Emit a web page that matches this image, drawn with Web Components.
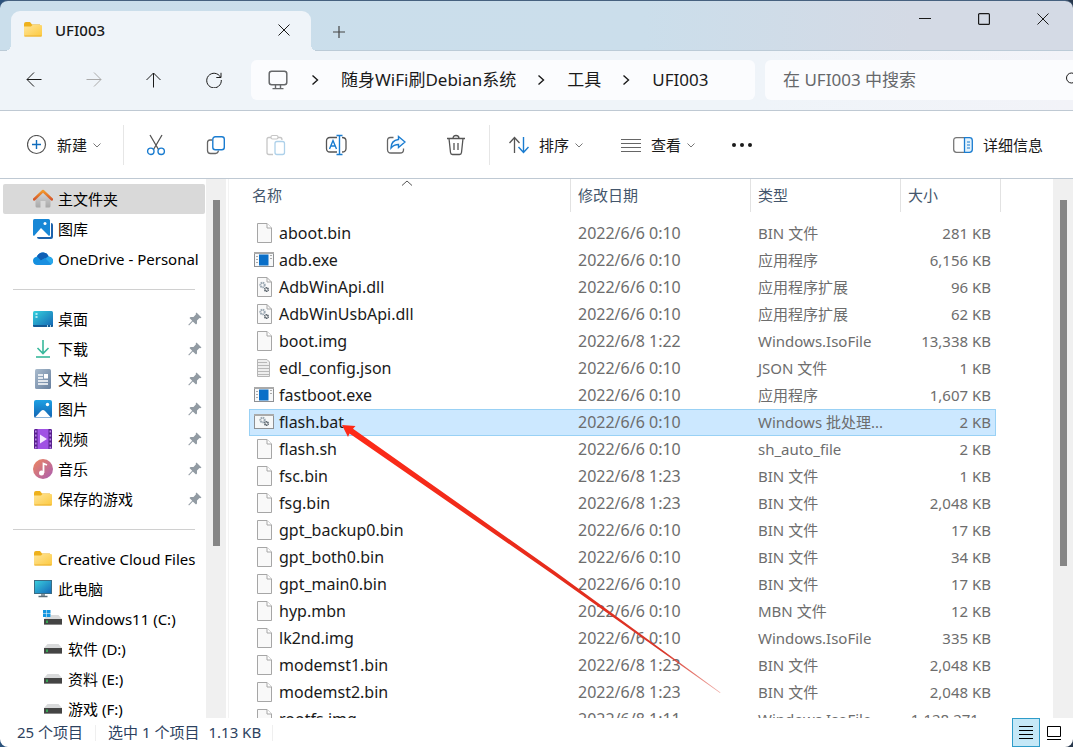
<!DOCTYPE html>
<html lang="zh-CN">
<head>
<meta charset="utf-8">
<title>UFI003</title>
<style>
html,body{height:100%;margin:0}
body{font:15px/20px "Noto Sans","Noto Sans CJK SC",sans-serif;color:#1a1a1a;background:linear-gradient(90deg,#2b527c,#46627f 40%,#3a3a55 90%,#27374c);overflow:hidden}
</style>
</head>
<body>
<explorer-window></explorer-window>
<script>
const ICONS = {
  folder: [20,20,`<defs><linearGradient id="f" x2="1" y2="1"><stop stop-color="#ffe59a"/><stop offset="1" stop-color="#fcc93f"/></linearGradient></defs><path d="M1 4q0-2 2-2h4l2 2.500h8v3H1z" fill="#eeb11c"/><path d="M1 6.500h7l1.500-1.500H18q1 0 1 1v9.500q0 1-1 1H2q-1 0-1-1z" fill="url(#f)"/><path d="M1.500 16h17" stroke="#eab030" />`],
  close: [12,12,`<path d="M.5.5l11 11M11.500.5l-11 11" stroke="currentColor"/>`],
  plus: [12,12,`<path d="M6 0v12M0 6h12" stroke="currentColor" stroke-width="1.200"/>`],
  min: [12,12,`<path d="M0 5.500h12" stroke="currentColor"/>`],
  max: [12,12,`<rect x=".6" y=".6" width="10.800" height="10.800" rx="1" stroke="currentColor" stroke-width="1.200"/>`],
  back: [16,16,`<path d="M15.500 7.500H1M8 .5l-7 7 7 7" stroke="currentColor"/>`],
  forward: [16,16,`<path d="M.5 7.500H15M8 .5l7 7-7 7" stroke="currentColor"/>`],
  up: [16,16,`<path d="M7.500 15.500V1M.5 8l7-7 7 7" stroke="currentColor"/>`],
  refresh: [16,16,`<path d="M14.500 5.200A7.300 7.300 0 1 0 15.300 8M15 .8v4.700h-4.700" stroke="currentColor"/>`],
  monitor: [20,20,`<rect x="1.200" y="1.200" width="17.600" height="13.600" rx="2.500" stroke="#66686a" stroke-width="1.500"/><path d="M7.500 15v3M12.500 15v3M4.500 18.600h11" stroke="#66686a" stroke-width="1.400"/>`],
  crumb: [8,12,`<path d="M1.500 1.500L6.500 6l-5 4.500" stroke="currentColor" stroke-width="1.400"/>`],
  search: [16,16,`<circle cx="6.500" cy="6" r="5" stroke="currentColor"/><path d="M10 10l5 5" stroke="currentColor"/>`],
  down: [8,8,`<path d="M.5 2.500L4 6l3.500-3.500" stroke="#777"/>`],
  sortup: [12,6,`<path d="M1 5.500l5-4.500 5 4.500" stroke="#555"/>`],
  create: [20,20,`<circle cx="9.500" cy="9.500" r="9" stroke="#555" stroke-width="1.200"/><path d="M9.500 5v9M5 9.500h9" stroke="#0f6cbd" stroke-width="1.400"/>`],
  cut: [20,22,`<path d="M4 1l8.500 14.500M16 1L7.500 15.500" stroke="#555" stroke-width="1.300"/><circle cx="4.800" cy="17.300" r="3.200" stroke="#1a7cd0" stroke-width="1.400"/><circle cx="15.200" cy="17.300" r="3.200" stroke="#1a7cd0" stroke-width="1.400"/>`],
  copy: [20,20,`<path d="M6 5H4Q1.500 5 1.500 7.500v8Q1.500 18.500 4.500 18.500h5q2.500 0 3-3" stroke="#666" stroke-width="1.300"/><rect x="6.800" y="1.700" width="11.500" height="13" rx="2.500" stroke="#1a7cd0" stroke-width="1.400"/>`],
  paste: [20,22,`<path d="M5 3.500H2.800Q1 3.500 1 5.500v13q0 2 2 2h4M12 3.500h2.200Q16 3.500 16 6" stroke="#c6c6c6" stroke-width="1.300"/><rect x="5" y="1.500" width="7" height="3.500" rx="1.500" stroke="#c6c6c6" stroke-width="1.200"/><rect x="9" y="7.500" width="9.500" height="13" rx="2" stroke="#aed1ea" stroke-width="1.300"/>`],
  rename: [22,22,`<path d="M12 3.500H5Q1.500 3.500 1.500 7v7.500Q1.500 18 5 18h7M17 3.500q4 0 4 3.500v7.500q0 3.500-4 3.500" stroke="#555" stroke-width="1.300"/><path d="M14.500 1.500v19M11.500 1.500h6M11.500 20.500h6M4.500 15L8 6.500l3.500 8.500M5.700 12h4.600" stroke="#1a7cd0" stroke-width="1.400"/>`],
  share: [20,20,`<path d="M7.500 2.500h-3Q1.500 2.500 1.500 5.500v9q0 3.500 3.500 3.500h9q3.500 0 3.500-3v-1.500" stroke="#666" stroke-width="1.300"/><path d="M12.500 1.500L19 7l-6.500 5.500v-3Q8 9.500 5 13q0-7.500 7.500-8.500z" stroke="#1a7cd0" stroke-width="1.400" fill="#f2f9ff"/>`],
  trash: [20,22,`<path d="M1 4.500h18M7 4.500Q7 1.500 10 1.500t3 3M3 4.500l1.500 14q.2 2 2 2h7q1.800 0 2-2L17 4.500M8 9v7M12 9v7" stroke="#555" stroke-width="1.300"/>`],
  sort: [20,18,`<path d="M5.500 17V2M.5 7l5-5.500 5 5.500" stroke="#555" stroke-width="1.300"/><path d="M14.500 1v15M9.500 11l5 5.500 5-5.500" stroke="#1a7cd0" stroke-width="1.400"/>`],
  view: [20,14,`<path d="M0 1.500h20M0 5.500h20M0 9.500h20M0 13.500h20" stroke="#666"/>`],
  more: [20,4,`<g fill="#1a1a1a"><circle cx="2" cy="2" r="2"/><circle cx="10" cy="2" r="2"/><circle cx="18" cy="2" r="2"/></g>`],
  details: [20,16,`<path d="M12 .7H3.500Q.7.700.7 3.500v9q0 2.800 2.800 2.800H12" stroke="#777" stroke-width="1.300"/><path d="M11.500.7h5q2.800 0 2.800 2.800v9q0 2.800-2.800 2.800h-5z" fill="#e3f2fc" stroke="#1a7cd0" stroke-width="1.300"/><path d="M14 5h3M14 8h3M14 11h3" stroke="#1a7cd0"/>`],
  home: [20,20,`<defs><linearGradient id="h" y2="1" x2="0"><stop stop-color="#d8d8d8"/><stop offset="1" stop-color="#a8a8a8"/></linearGradient><linearGradient id="r" y2="1" x2="0"><stop stop-color="#f39a2c"/><stop offset="1" stop-color="#d4572b"/></linearGradient></defs><path d="M2.500 9L10 2.500 17.500 9v8q0 1.500-1.500 1.500h-3.500V12h-5v6.500H4q-1.500 0-1.500-1.500z" fill="url(#h)"/><path d="M1 10.500L10 2l9 8.500" stroke="url(#r)" stroke-width="2.500" stroke-linejoin="round" stroke-linecap="round"/>`],
  gallery: [20,20,`<rect x="4" y="4" width="16" height="16" rx="2" fill="#1c62ac"/><rect x="2" y="2" width="16" height="16" rx="1" fill="#fff"/><rect width="17" height="17" rx="1.500" fill="#1787d6"/><path d="M1 17l7-8 8 8z" fill="#fff"/><circle cx="12" cy="4.500" r="1.500" fill="#fff"/>`],
  cloud: [20,14,`<path d="M5 13Q0 13 0 8.800 0 5.500 4 4.500 6 0 10.500.5q4 .5 5 4Q20 5 20 9t-4.500 4z" fill="#1490df"/><path d="M4 4.500Q6 0 10.500.5q4 .5 5 4L8 8.500z" fill="#0f5fb5"/><path d="M7 13l8-8.500Q20 5 20 9t-4.500 4z" fill="#2aa8ea"/><path d="M2 12L12 6l6 6q-1 1-3 1H5z" fill="#1a8fe0"/>`],
  desktop: [20,16,`<defs><linearGradient id="d" x2="1" y2="1"><stop stop-color="#35d0dc"/><stop offset="1" stop-color="#1364b4"/></linearGradient></defs><rect width="20" height="16" rx="1.500" fill="url(#d)"/><path d="M0 14h20v.5q0 1.500-1.500 1.500h-17Q0 16 0 14.500z" fill="#145a95"/><path d="M2.500 3h2M2.500 6h2M14 15h1M17 15h1" stroke="#d6fbff" stroke-width="1.400"/>`],
  download: [20,20,`<path d="M10 1v13M4.500 9l5.500 5.500L15.500 9" stroke="#39b89c" stroke-width="1.600"/><path d="M3 18h14" stroke="#39b89c" stroke-width="1.600"/>`],
  doc: [20,20,`<defs><linearGradient id="o" x2="1" y2="1"><stop stop-color="#a9bbcd"/><stop offset="1" stop-color="#667f9e"/></linearGradient></defs><rect x="2" width="16" height="20" rx="1.500" fill="url(#o)"/><path d="M5 6h5M5 9h5M5 12h10M5 15h10" stroke="#fff" stroke-width="1.400"/><path d="M11 5h4v4.500h-4z" fill="#fff"/>`],
  picture: [20,20,`<defs><linearGradient id="p" x2="0" y2="1"><stop stop-color="#1ea1e4"/><stop offset="1" stop-color="#1263b2"/></linearGradient></defs><rect x="1" y="1" width="18" height="18" rx="2" fill="url(#p)"/><path d="M2 18.500l6-6.500q2-2 4 0l6 6.500z" fill="#fff"/><circle cx="14.500" cy="5.500" r="1.700" fill="#fff"/>`],
  video: [20,20,`<rect x="1" width="18" height="20" rx="1.500" fill="#a052e4"/><path d="M1 1.500Q1 0 2.500 0H4.500v20h-2Q1 20 1 18.500zM15.500 0h2Q19 0 19 1.500v17q0 1.500-1.500 1.500h-2z" fill="#57208c"/><path d="M2.800 1.500v18M17.300 1.500v18" stroke="#b984ea" stroke-width="1.600" stroke-dasharray="2 2"/><path d="M7 5.500l7 4.500-7 4.500z" fill="#f4e8ff"/>`],
  music: [20,20,`<defs><linearGradient id="m" x2="1" y2="1"><stop stop-color="#ef875d"/><stop offset="1" stop-color="#a95db3"/></linearGradient></defs><circle cx="10" cy="10" r="10" fill="url(#m)"/><path d="M10.500 14V4.500L14 6" stroke="#fff" stroke-width="1.800"/><circle cx="8.500" cy="14" r="2.500" fill="#fff"/>`],
  pc: [20,18,`<defs><linearGradient id="c" x2="1" y2="1"><stop stop-color="#3ad0de"/><stop offset="1" stop-color="#1467b8"/></linearGradient></defs><rect x="1.500" y=".5" width="17" height="13" fill="url(#c)" stroke="#3b6d85"/><path d="M8 14h4v2H8z" fill="#8b99a2"/><path d="M5.500 16.500h9" stroke="#5b6c76" stroke-width="1.500"/>`],
  drive: [20,18,`<path d="M4.500 4h11L19 8H1z" fill="#d9dadb"/><rect x="1" y="8" width="18" height="6" fill="#444"/><path d="M1 13.500h18" stroke="#888"/><path d="M4 9.500v2.500" stroke="#34c759" stroke-width="1.500"/>`],
  windrive: [20,18,`<path d="M4.500 5h11L19 9H1z" fill="#d9dadb"/><rect x="1" y="9" width="18" height="6" fill="#444"/><path d="M1 14.500h18" stroke="#888"/><path d="M4 10.500V13" stroke="#34c759" stroke-width="1.500"/><path d="M0 0h7.500v7H0z" fill="#fff"/><path d="M0 0h3.500v3.300H0zM4 0h3.500v3.300H4zM0 3.800h3.500V7H0zM4 3.800h3.500V7H4z" fill="#1596e0"/>`],
  pin: [14,14,`<path d="M8.500.5l5 5-1.200.8-.8-.2-2.500 2.500v2.900L8 12.500 4.800 9.500 1 13.500l-.7-.7L4.200 8.800 1.500 6l1-1h3L8 2.300l-.3-.8z" fill="#929ba3"/>`],
  file: [20,20,`<path d="M3.500.5H13l4.500 4.500v14.500h-14z" fill="#f9f9f9" stroke="#a6a6a6"/><path d="M13 .5V5h4.500" stroke="#a6a6a6" fill="#fff"/>`],
  json: [20,20,`<path d="M3.500 1.500H13l2.500 2.500v14.500h-12z" fill="#eee" stroke="#b5b5b5"/><path d="M4 4.500h9M4 7.500h11M4 10.500h11M4 13.500h11M4 16.500h11" stroke="#b8b8b8"/>`],
  exe: [20,20,`<rect x=".5" y="2.500" width="19" height="14" fill="#f7f8f9" stroke="#8d9094"/><path d="M0 3h20" stroke="#aaa" stroke-width="2"/><rect x="5" y="4.500" width="9.500" height="11" fill="#0a6fc8"/><path d="M2 6.500h2M2 9.500h2M2 12.500h2M16 5.500h2M16 8.500h2" stroke="#aaa"/>`],
  dll: [20,20,`<path d="M3.500.5H13l4.500 4.500v14.500h-14z" fill="#f9f9f9" stroke="#a6a6a6"/><path d="M13 .5V5h4.500" stroke="#a6a6a6"/><circle cx="8.500" cy="8" r="2.200" stroke="#9ba8b3" stroke-width="2" stroke-dasharray="1.400 .5"/><circle cx="12.500" cy="12.500" r="1.700" stroke="#59636c" stroke-width="1.800" stroke-dasharray="1.200 .4"/>`],
  bat: [20,20,`<rect x=".5" y="2.500" width="19" height="14" fill="#f5f7f8" stroke="#8d9094"/><path d="M0 3h20" stroke="#aaa" stroke-width="2"/><circle cx="8.500" cy="8" r="2.200" stroke="#9ba8b3" stroke-width="2" stroke-dasharray="1.400 .5"/><circle cx="12.500" cy="11.500" r="1.700" stroke="#59636c" stroke-width="1.800" stroke-dasharray="1.200 .4"/>`],
  rows: [14,14,`<path d="M0 .5h14M0 4.500h14M0 8.500h14M0 12.500h14" stroke="#000"/>`],
  thumb: [14,14,`<path d="M.5.5h13v10H.5zM0 13.500h14" stroke="#000"/>`]
};

const BASE = `*,:host{box-sizing:border-box}button{font:inherit;color:inherit;background:none;border:0;margin:0;padding:0;display:flex;align-items:center;justify-content:center}`;
function define(name, css, html) {
  customElements.define(name, class extends HTMLElement {
    constructor() {
      super();
      this.attachShadow({mode: 'open'}).innerHTML = `<style>${BASE}${css}</style>${typeof html === 'function' ? html() : html}`;
    }
  });
}

customElements.define('ui-icon', class extends HTMLElement {
  connectedCallback() {
    const [w, h, body] = ICONS[this.getAttribute('name')];
    if (!this.shadowRoot) this.attachShadow({mode: 'open'});
    this.shadowRoot.innerHTML = `<style>:host{display:block;flex:none}svg{display:block}</style><svg width="${w}" height="${h}" viewBox="0 0 ${w} ${h}" fill="none" aria-hidden="true">${body}</svg>`;
  }
});

define('scroll-bar', `:host{display:block;width:20px;background:#f0f0f0;padding:21px 6px 0 7px}div{height:var(--thumb);background:#868686}`, `<div></div>`);

define('title-bar', `
:host{display:flex;height:50px;background:linear-gradient(90deg,#cadeeb,#cbdeeb 60%,#d4dae5 85%);border-bottom:1px solid #bccbd7;padding-left:11px}
.tab{position:relative;display:flex;align-items:center;width:300px;height:40px;margin-top:10px;padding:0 12px 2px;background:#eff4f9;border-radius:9px 9px 0 0;font-weight:500}
.tab span{flex:1;margin-left:12px}
.tab::before,.tab::after{content:"";position:absolute;bottom:0;width:6px;height:6px}
.tab::before{left:-6px;background:radial-gradient(circle at 0 0,transparent 6px,#eff4f9 6px)}
.tab::after{right:-6px;background:radial-gradient(circle at 100% 0,transparent 6px,#eff4f9 6px)}
.x{width:30px;height:30px}
.add{width:40px;height:40px;margin:11px 0 0 8px;color:#444}
.win{display:flex;margin-left:auto;height:36px;padding-right:1px}.win button{width:59px}`,
`<div class="tab"><ui-icon name="folder"></ui-icon><span>UFI003</span><button class="x" aria-label="关闭标签页"><ui-icon name="close"></ui-icon></button></div>
<button class="add" aria-label="新标签页"><ui-icon name="plus"></ui-icon></button>
<div class="win"><button aria-label="最小化"><ui-icon name="min"></ui-icon></button><button aria-label="最大化"><ui-icon name="max"></ui-icon></button><button aria-label="关闭"><ui-icon name="close"></ui-icon></button></div>`);

define('nav-bar', `
:host{display:flex;align-items:flex-start;height:60px;background:linear-gradient(90deg,#eff4f9 70%,#f2f3f8);border-bottom:1px solid #bfc9d3;padding:9px 0 0 4px;overflow:hidden}
.go{width:60px;height:40px}.go[disabled]{color:#aaa}
nav{flex:1;display:flex;align-items:center;height:40px;margin:0 10px 0 7px;padding:0 0 1px 17px;background:#fbfcfe;border-radius:6px;font-size:17px;line-height:24px;white-space:nowrap}
nav a{color:inherit;text-decoration:none}
nav ui-icon[name=crumb]{margin:0 22px 0 21px}
nav ui-icon:nth-child(2){margin:0 22px 0 23px}
label{display:flex;align-items:center;width:308px;height:40px;background:#fbfcfe;border-radius:6px 0 0 6px;padding-left:18px}
input{flex:1;min-width:0;border:0;padding:0;background:none;font:inherit;font-size:17px;line-height:24px}
input::placeholder{color:#66686b;opacity:1}
label ui-icon{margin-right:-8px}`,
`<button class="go" aria-label="后退"><ui-icon name="back"></ui-icon></button><button class="go" disabled aria-label="前进"><ui-icon name="forward"></ui-icon></button><button class="go" aria-label="向上"><ui-icon name="up"></ui-icon></button><button class="go" aria-label="刷新"><ui-icon name="refresh"></ui-icon></button>
<nav><ui-icon name="monitor"></ui-icon><ui-icon name="crumb"></ui-icon><a href="#">随身WiFi刷Debian系统</a><ui-icon name="crumb"></ui-icon><a href="#">工具</a><ui-icon name="crumb"></ui-icon><a href="#">UFI003</a></nav>
<label><input type="text" aria-label="搜索" placeholder="在 UFI003 中搜索"><ui-icon name="search"></ui-icon></label>`);

define('command-bar', `
:host{display:flex;align-items:center;height:68px;background:#fff;border-bottom:1px solid #bfc9d3;padding:0 30px 0 27px}
button{height:40px;white-space:nowrap}.t{gap:10px}.t ui-icon[name=down]{margin-left:-4px}
.i{width:60px}i{width:1px;height:40px;background:#e6e6e6}.i+i{margin-left:3px}
.n{margin-right:22px}.n+i{margin-right:2px}.s{margin-left:19px}.v{margin-left:38px}.m{margin-left:37px}.d{margin-left:auto}`,
`<button class="t n"><ui-icon name="create"></ui-icon>新建<ui-icon name="down"></ui-icon></button><i></i>
${[['cut','剪切'],['copy','复制'],['paste','粘贴'],['rename','重命名'],['share','共享'],['trash','删除']].map(([n,l])=>`<button class="i" aria-label="${l}"><ui-icon name="${n}"></ui-icon></button>`).join('')}<i></i>
<button class="t s"><ui-icon name="sort"></ui-icon>排序<ui-icon name="down"></ui-icon></button><button class="t v"><ui-icon name="view"></ui-icon>查看<ui-icon name="down"></ui-icon></button><button class="m" aria-label="更多"><ui-icon name="more"></ui-icon></button>
<button class="t d"><ui-icon name="details"></ui-icon>详细信息</button>`);

customElements.define('side-link', class extends HTMLElement {
  connectedCallback() {
    this.attachShadow({mode: 'open'}).innerHTML = `<style>
:host{display:block;height:30px;margin:0 1px 0 3px;border-radius:2px;color:#000}
:host([selected]){background:#d9d9d9}
a{display:flex;align-items:center;gap:5px;height:30px;padding:0 3px 0 30px;color:inherit;text-decoration:none;white-space:nowrap}
:host([nested]) a{padding-left:40px}
.pin{margin-left:auto}</style><a href="#"><ui-icon name="${this.getAttribute('icon')}"></ui-icon><slot></slot>${this.hasAttribute('pinned') ? '<ui-icon class="pin" name="pin"></ui-icon>' : ''}</a>`;
  }
});

define('side-nav', `
:host{display:flex;background:#fff;overflow:hidden;border-right:1px solid #f3f3f3}
nav{flex:1;min-width:0;padding-top:5px}
hr{height:1px;border:0;background:#d0d0d0;margin:15px 11px 14px 13px}
scroll-bar{margin-right:2px}`,
() => {
  const item = ([icon, text, attrs]) => `<side-link icon="${icon}" ${attrs || ''}>${text}</side-link>`;
  return `<nav>${[['home','主文件夹','selected'],['gallery','图库'],['cloud','OneDrive - Personal']].map(item).join('')}<hr>${[['desktop','桌面','pinned'],['download','下载','pinned'],['doc','文档','pinned'],['picture','图片','pinned'],['video','视频','pinned'],['music','音乐','pinned'],['folder','保存的游戏','pinned']].map(item).join('')}<hr>${[['folder','Creative Cloud Files'],['pc','此电脑'],['windrive','Windows11 (C:)','nested'],['drive','软件 (D:)','nested'],['drive','资料 (E:)','nested'],['drive','游戏 (F:)','nested']].map(item).join('')}</nav><scroll-bar style="--thumb:346px"></scroll-bar>`;
});

const BIN = 'BIN 文件', APP = '应用程序', EXT = '应用程序扩展', ISO = 'Windows.IsoFile', A = '2022/6/6 0:10';
const FILES = [
  ['file','aboot.bin',A,BIN,'281 KB'],['exe','adb.exe',A,APP,'6,156 KB'],['dll','AdbWinApi.dll',A,EXT,'96 KB'],['dll','AdbWinUsbApi.dll',A,EXT,'62 KB'],
  ['file','boot.img','2022/6/8 1:22',ISO,'13,338 KB'],['json','edl_config.json',A,'JSON 文件','1 KB'],['exe','fastboot.exe',A,APP,'1,607 KB'],['bat','flash.bat',A,'Windows 批处理...','2 KB'],
  ['file','flash.sh',A,'sh_auto_file','2 KB'],['file','fsc.bin','2022/6/8 1:23',BIN,'1 KB'],['file','fsg.bin','2022/6/8 1:23',BIN,'2,048 KB'],['file','gpt_backup0.bin',A,BIN,'17 KB'],
  ['file','gpt_both0.bin',A,BIN,'34 KB'],['file','gpt_main0.bin',A,BIN,'17 KB'],['file','hyp.mbn',A,'MBN 文件','12 KB'],['file','lk2nd.img',A,ISO,'335 KB'],
  ['file','modemst1.bin','2022/6/8 1:23',BIN,'2,048 KB'],['file','modemst2.bin','2022/6/8 1:23',BIN,'2,048 KB'],['file','rootfs.img','2022/6/8 1:11',ISO,'1,128,271...']
];
define('file-list', `
:host{position:relative;display:flex;justify-content:space-between;background:#fff;overflow:hidden;min-width:0}
table{table-layout:fixed;border-collapse:separate;border-spacing:0;width:747px;margin-left:20px;height:max-content}
.c1{width:322px}.c2{width:180px}.c3{width:150px}.c4{width:95px}
th{position:relative;height:33px;padding:0 0 2px 7px;font-weight:400;color:#44566c}
th:first-child{padding-left:3px}
th::after{content:"";position:absolute;top:0;right:0;width:1px;height:33px;background:#e2e2e2}
th:last-child::after{right:-5px}
th ui-icon{position:absolute;left:152px;top:1px}
tbody::before{content:"";display:block;height:8px}
td{height:27px;padding:0 0 2px 7px;color:#6d6d6d;white-space:nowrap;border:solid transparent;border-width:1px 0}
td:first-child{padding:0 0 0 4px;border-left-width:1px;color:#1a1a1a}
td:nth-child(-n+2){font-size:16px}
td:last-child{text-align:right;padding:0 4px 2px 0;border-right-width:1px}
tr.on td{background:#cce8ff;border-color:#99d1f5}
.f{display:flex;align-items:center;gap:5px;height:25px;padding-bottom:2px}
.arrow{position:absolute;left:113px;top:246px}`,
() => `<table><colgroup><col class="c1"><col class="c2"><col class="c3"><col class="c4"></colgroup><thead><tr><th><button>名称</button><ui-icon name="sortup"></ui-icon></th><th><button>修改日期</button></th><th><button>类型</button></th><th><button>大小</button></th></tr></thead><tbody>${FILES.map(([i,n,d,t,s])=>`<tr${i==='bat'?' class="on" aria-selected="true"':''}><td><div class="f"><ui-icon name="${i}"></ui-icon>${n}</div></td><td>${d}</td><td>${t}</td><td>${s}</td></tr>`).join('')}</tbody></table><scroll-bar style="--thumb:366px"></scroll-bar>
<svg class="arrow" width="380" height="270" viewBox="342 425 380 270" aria-hidden="true"><defs><linearGradient id="a" gradientUnits="userSpaceOnUse" x1="342" y1="425" x2="720" y2="692"><stop stop-color="#ff2a18"/><stop offset=".6" stop-color="#e42c1c"/><stop offset=".85" stop-color="#d8372a"/><stop offset="1" stop-color="#d8372a" stop-opacity=".4"/></linearGradient></defs><path d="M342 425L355.500 426 353 428.800 555 571.500 720.500 692.500 720 693 553 574.500 349.500 433.500 348 437z" fill="url(#a)"/></svg>`);

define('status-bar', `
:host{display:flex;align-items:center;height:29px;background:#fff;color:#2d4260;padding:0 5px 0 17px;white-space:nowrap}
span{margin-bottom:2px}.sel{display:flex;align-items:center;gap:9px;height:16px;border:solid #efefef;border-width:0 1px;margin-left:12px;padding:0 11px 0 12px}
.views{display:flex;align-items:center;margin-left:auto;height:29px}
button{width:28px;height:29px}.on{background:#c5e8f7;border:1px solid #2e9cc9}`,
`<span>25 个项目</span><div class="sel"><span>选中 1 个项目</span><span>1.13 KB</span></div>
<div class="views"><button class="on" aria-label="详细信息视图"><ui-icon name="rows"></ui-icon></button><button aria-label="大图标视图"><ui-icon name="thumb"></ui-icon></button></div>`);

define('explorer-window', `
:host{display:grid;grid-template-rows:auto auto auto minmax(0,1fr) auto;height:100vh;border-top:1px solid #46617f;border-radius:8px;overflow:hidden}
main{display:grid;grid-template-columns:229px minmax(0,1fr);min-height:0}`,
`<title-bar></title-bar><nav-bar></nav-bar><command-bar></command-bar><main><side-nav></side-nav><file-list></file-list></main><status-bar></status-bar>`);
</script>
</body>
</html>
